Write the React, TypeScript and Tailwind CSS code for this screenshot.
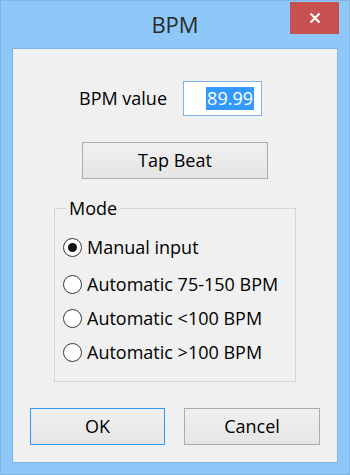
import React from 'react';

// Win8-style "BPM" dialog

const MODES = ['Manual input', 'Automatic 75-150 BPM', 'Automatic <100 BPM', 'Automatic >100 BPM'];

function Radio({ checked, label }: { checked?: boolean; label: string }) {
  return (
    <div className="flex items-center h-[34px]">
      <div className="w-[19px] h-[19px] rounded-full border border-[#3a3a3a] bg-white flex items-center justify-center shrink-0">
        {checked && <div className="w-[9px] h-[9px] rounded-full bg-[#111]" />}
      </div>
      <span className="ml-[5px] text-[18px] text-black leading-none">{label}</span>
    </div>
  );
}

function Button({ label, focused, className }: { label: string; focused?: boolean; className?: string }) {
  return (
    <div
      className={`h-[37px] flex items-center justify-center text-[18px] text-black border bg-gradient-to-b from-[#f0f0f0] to-[#e5e5e5] ${
        focused ? 'border-[#3399ff]' : 'border-[#acacac]'
      } ${className ?? ''}`}
    >
      {label}
    </div>
  );
}

export default function App() {
  return (
    <div
      className="w-[350px] h-[475px] bg-[#8ec8f9] flex flex-col border border-[#7fb6e6]"
      style={{ fontFamily: '"Open Sans", "Noto Sans", sans-serif' }}
    >
      {/* Title bar */}
      <div className="h-[47px] flex items-start relative">
        <div className="flex-1 text-center text-[22px] leading-[28px] text-[#2a2a2a] pt-[9px]">BPM</div>
        <div className="absolute right-[10px] top-[1px] w-[49px] h-[32px] bg-[#c75050] flex items-center justify-center">
          <svg width="12" height="12" viewBox="0 0 12 12">
            <path d="M1.5 1.5 L10.5 10.5 M10.5 1.5 L1.5 10.5" stroke="white" strokeWidth="2.2" />
          </svg>
        </div>
      </div>

      {/* Client area */}
      <div className="mx-[11px] h-[415px] bg-[#f0f0f0] border border-[#7fb6e6]">
        {/* BPM value row */}
        <div className="flex items-center mt-[32px] ml-[66px]">
          <span className="text-[18px] text-black">BPM value</span>
          <div className="ml-[16px] w-[79px] h-[35px] bg-white border border-[#7eb4ea] flex items-center justify-end pr-[7px]">
            <span className="bg-[#3399ff] text-white text-[18px] leading-[23px] px-[1px]">89.99</span>
          </div>
        </div>

        <Button label="Tap Beat" className="mt-[26px] ml-[69px] w-[186px]" />

        <fieldset className="mt-[18px] ml-[41px] w-[242px] h-[185px] border border-[#d5d5d5] pl-[8px]">
          <legend className="text-[18px] text-black px-[3px] ml-[3px] leading-[22px]">Mode</legend>
          <div className="mt-[11px]">
            <Radio checked label={MODES[0]} />
            <div className="h-[3px]" />
            <Radio label={MODES[1]} />
            <Radio label={MODES[2]} />
            <Radio label={MODES[3]} />
          </div>
        </fieldset>

        <div className="flex mt-[26px] ml-[17px] gap-[19px]">
          <Button label="OK" focused className="w-[135px]" />
          <Button label="Cancel" className="w-[136px]" />
        </div>
      </div>
    </div>
  );
}
